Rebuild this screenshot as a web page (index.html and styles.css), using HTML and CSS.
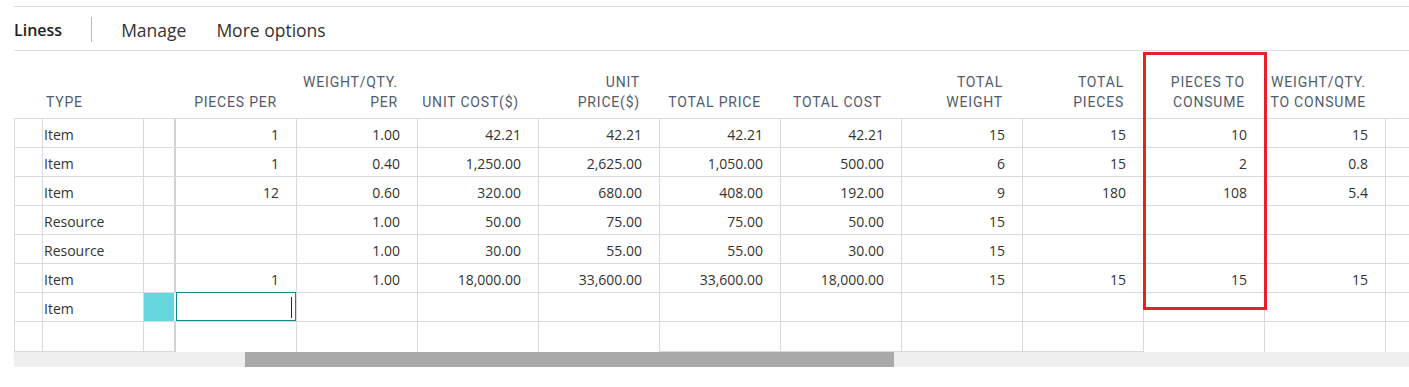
FILE: index.html
```html
<!DOCTYPE html>
<html lang="en">
  <head>
    <meta charset="UTF-8" />
    <title>Lines</title>
    <link rel="stylesheet" href="styles.css">
  </head>
  <body>
    <div class="page">
      <div class="toolbar">
        <span class="tab-title">Liness</span>
        <span class="divider"></span>
        <a href="#">Manage</a>
        <a href="#">More options</a>
      </div>

      <div class="lines">
        <div class="row head">
          <div class="cell"></div>
          <div class="cell text">Type</div>
          <div class="cell"></div>
          <div class="cell">Pieces per</div>
          <div class="cell">Weight/Qty.<br>per</div>
          <div class="cell">Unit cost($)</div>
          <div class="cell">Unit<br>price($)</div>
          <div class="cell">Total price</div>
          <div class="cell">Total cost</div>
          <div class="cell">Total<br>weight</div>
          <div class="cell">Total<br>pieces</div>
          <div class="cell">Pieces to<br>consume</div>
          <div class="cell">Weight/Qty.<br>to consume</div>
          <div class="cell"></div>
        </div>

        <div class="row">
          <div class="cell"></div>
          <div class="cell text">Item</div>
          <div class="cell"></div>
          <div class="cell freeze">1</div>
          <div class="cell">1.00</div>
          <div class="cell">42.21</div>
          <div class="cell">42.21</div>
          <div class="cell">42.21</div>
          <div class="cell">42.21</div>
          <div class="cell">15</div>
          <div class="cell">15</div>
          <div class="cell">10</div>
          <div class="cell">15</div>
          <div class="cell"></div>
        </div>

        <div class="row">
          <div class="cell"></div>
          <div class="cell text">Item</div>
          <div class="cell"></div>
          <div class="cell freeze">1</div>
          <div class="cell">0.40</div>
          <div class="cell">1,250.00</div>
          <div class="cell">2,625.00</div>
          <div class="cell">1,050.00</div>
          <div class="cell">500.00</div>
          <div class="cell">6</div>
          <div class="cell">15</div>
          <div class="cell">2</div>
          <div class="cell">0.8</div>
          <div class="cell"></div>
        </div>

        <div class="row">
          <div class="cell"></div>
          <div class="cell text">Item</div>
          <div class="cell"></div>
          <div class="cell freeze">12</div>
          <div class="cell">0.60</div>
          <div class="cell">320.00</div>
          <div class="cell">680.00</div>
          <div class="cell">408.00</div>
          <div class="cell">192.00</div>
          <div class="cell">9</div>
          <div class="cell">180</div>
          <div class="cell">108</div>
          <div class="cell">5.4</div>
          <div class="cell"></div>
        </div>

        <div class="row">
          <div class="cell"></div>
          <div class="cell text">Resource</div>
          <div class="cell"></div>
          <div class="cell freeze"></div>
          <div class="cell">1.00</div>
          <div class="cell">50.00</div>
          <div class="cell">75.00</div>
          <div class="cell">75.00</div>
          <div class="cell">50.00</div>
          <div class="cell">15</div>
          <div class="cell"></div>
          <div class="cell"></div>
          <div class="cell"></div>
          <div class="cell"></div>
        </div>

        <div class="row">
          <div class="cell"></div>
          <div class="cell text">Resource</div>
          <div class="cell"></div>
          <div class="cell freeze"></div>
          <div class="cell">1.00</div>
          <div class="cell">30.00</div>
          <div class="cell">55.00</div>
          <div class="cell">55.00</div>
          <div class="cell">30.00</div>
          <div class="cell">15</div>
          <div class="cell"></div>
          <div class="cell"></div>
          <div class="cell"></div>
          <div class="cell"></div>
        </div>

        <div class="row">
          <div class="cell"></div>
          <div class="cell text">Item</div>
          <div class="cell"></div>
          <div class="cell freeze">1</div>
          <div class="cell">1.00</div>
          <div class="cell">18,000.00</div>
          <div class="cell">33,600.00</div>
          <div class="cell">33,600.00</div>
          <div class="cell">18,000.00</div>
          <div class="cell">15</div>
          <div class="cell">15</div>
          <div class="cell">15</div>
          <div class="cell">15</div>
          <div class="cell"></div>
        </div>

        <div class="row">
          <div class="cell"></div>
          <div class="cell text">Item</div>
          <div class="cell selected"></div>
          <div class="cell freeze editing"><span class="caret"></span></div>
          <div class="cell"></div>
          <div class="cell"></div>
          <div class="cell"></div>
          <div class="cell"></div>
          <div class="cell"></div>
          <div class="cell"></div>
          <div class="cell"></div>
          <div class="cell"></div>
          <div class="cell"></div>
          <div class="cell"></div>
        </div>

        <div class="row last">
          <div class="cell closed"></div>
          <div class="cell closed"></div>
          <div class="cell closed"></div>
          <div class="cell freeze"></div>
          <div class="cell"></div>
          <div class="cell"></div>
          <div class="cell"></div>
          <div class="cell closed"></div>
          <div class="cell closed"></div>
          <div class="cell closed"></div>
          <div class="cell closed"></div>
          <div class="cell"></div>
          <div class="cell"></div>
          <div class="cell"></div>
        </div>
      </div>

      <div class="scrollbar">
        <div class="thumb"></div>
      </div>

      <!-- red highlight around the consume column -->
      <div class="highlight"></div>
    </div>
  </body>
</html>
```

FILE: styles.css
```css
body {
  margin: 0;
  font-family: "Segoe UI", "Open Sans", sans-serif;
  color: #333;
  background-color: #fff;
}

.page {
  position: relative;
  padding: 6px 0 0 14px;
  overflow: hidden;
  height: 381px;
}

.toolbar {
  display: flex;
  align-items: center;
  height: 45px;
  border-top: 1px solid #dcdde0;
  border-bottom: 1px solid #dcdde0;
  font-size: 16px;
  padding-top: 2px;
  box-sizing: border-box;
}

.tab-title {
  font-weight: 600;
  color: #212121;
}

.divider {
  width: 1px;
  height: 25px;
  background-color: #b9b9b9;
  margin: 0 29px 0 29px;
}

.toolbar a {
  color: #333;
  text-decoration: none;
  font-size: 17.5px;
  margin-right: 30px;
}

.lines {
  width: 1520px;
}

.row {
  display: grid;
  grid-template-columns: 28px 101px 31px 122px repeat(10, 121px);
  height: 29px;
  border-bottom: 1px solid #d9dadd;
  box-sizing: border-box;
}

.row.last {
  border-bottom: none;
}

.cell {
  box-sizing: border-box;
  border-left: 1px solid #d9dadd;
  font-size: 14px;
  line-height: 24px;
  text-align: right;
  padding: 4px 17px 0 4px;
  white-space: nowrap;
}

.cell.text {
  text-align: left;
  padding-left: 1px;
}

.cell.freeze {
  border-left: 2px solid #cfd2d6;
}

.cell.selected {
  background-color: #66d6de;
}

.cell.editing {
  position: relative;
  border: 1px solid #0c8a92;
  margin-left: 2px;
  height: 29px;
  margin-top: -1px;
}

.caret {
  position: absolute;
  right: 3px;
  top: 4px;
  width: 1px;
  height: 21px;
  background-color: #222;
}

.cell.closed {
  border-bottom: 1px solid #d9dadd;
  height: 30px;
}

.row.head {
  height: 68px;
}

.row.head .cell {
  border-left: none;
  display: flex;
  flex-direction: column;
  justify-content: flex-end;
  font-family: Roboto, "Liberation Sans", sans-serif;
  font-size: 14px;
  font-weight: 400;
  letter-spacing: 0.8px;
  line-height: 20px;
  text-transform: uppercase;
  color: #505c6d;
  padding: 0 19px 6px 4px;
}

.row.head .cell.text {
  padding-left: 4px;
}

.scrollbar {
  margin-top: 1px;
  height: 15px;
  background-color: #efefef;
}

.thumb {
  margin-left: 231px;
  width: 649px;
  height: 15px;
  background-color: #a9a9a9;
}

.highlight {
  position: absolute;
  left: 1143px;
  top: 52px;
  width: 124px;
  height: 258px;
  border: 3px solid #e81f27;
  box-sizing: border-box;
}
```
